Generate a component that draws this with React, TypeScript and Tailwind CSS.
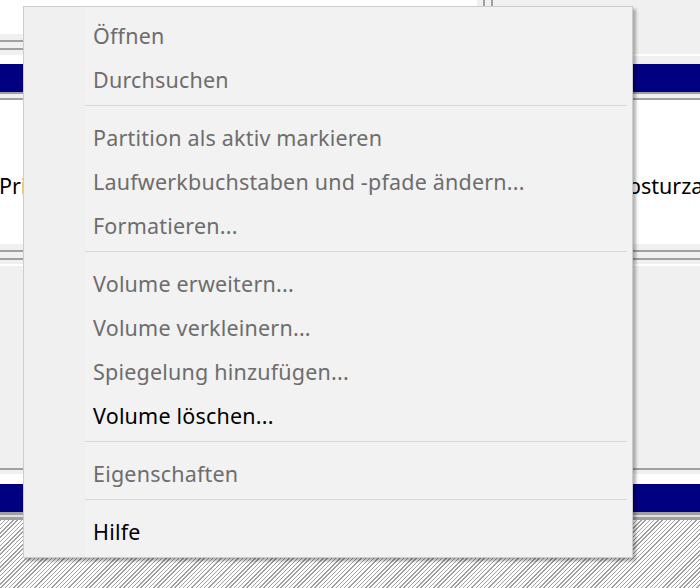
import React from "react";

type Entry = { label: string; enabled?: boolean } | "sep";

const entries: Entry[] = [
  { label: "Öffnen" },
  { label: "Durchsuchen" },
  "sep",
  { label: "Partition als aktiv markieren" },
  { label: "Laufwerkbuchstaben und -pfade ändern..." },
  { label: "Formatieren..." },
  "sep",
  { label: "Volume erweitern..." },
  { label: "Volume verkleinern..." },
  { label: "Spiegelung hinzufügen..." },
  { label: "Volume löschen...", enabled: true },
  "sep",
  { label: "Eigenschaften" },
  "sep",
  { label: "Hilfe", enabled: true },
];

const font = { fontFamily: '"Segoe UI", "Noto Sans", "Open Sans", sans-serif' };

function DoubleLine() {
  return (
    <div className="flex flex-col">
      <div className="h-[6px] bg-[#f0f0f0]" />
      <div className="h-[2px] bg-[#a0a0a0]" />
      <div className="h-[6px] bg-[#f0f0f0]" />
      <div className="h-[2px] bg-[#a0a0a0]" />
    </div>
  );
}

function ContextMenu() {
  return (
    <div
      className="absolute left-[23px] top-[6px] w-[610px] h-[552px] border border-[#cccccc] bg-[#f2f2f2] flex shadow-[3px_3px_3px_rgba(0,0,0,0.3)]"
      style={font}
    >
      <div className="w-[61px] bg-[#f0f0f0]" />
      <div className="flex-1 flex flex-col pt-[7px] pr-[5px]">
        {entries.map((e, i) =>
          e === "sep" ? (
            <div key={i} className="mt-[3px] mb-[10px] h-px bg-[#d7d7d7]" />
          ) : (
            <div
              key={i}
              className={`h-[44px] leading-[44px] pl-[8px] text-[21.5px] tracking-[0.2px] whitespace-nowrap ${
                e.enabled ? "text-black" : "text-[#6d6d6d]"
              }`}
            >
              {e.label}
            </div>
          )
        )}
      </div>
    </div>
  );
}

export default function App() {
  return (
    <div className="relative w-[700px] h-[588px] overflow-hidden bg-[#f0f0f0]">
      <div className="flex flex-col">
        {/* top: volume list + disk header */}
        <div className="flex h-[64px]">
          <div className="w-[477px] flex flex-col">
            <div className="h-[34px] bg-white" />
            <DoubleLine />
            <div className="h-[5px] bg-[#f0f0f0]" />
            <div className="h-[9px] bg-white" />
          </div>
          <div className="flex-1 flex flex-col">
            <div className="h-[54px] flex bg-[#f0f0f0]">
              <div className="w-[6px]" />
              <div className="w-[2px] bg-[#a0a0a0]" />
              <div className="w-[6px]" />
              <div className="w-[2px] bg-[#a0a0a0]" />
            </div>
            <div className="h-[2px] bg-white" />
            <div className="h-[8px] bg-[#f0f0f0]" />
          </div>
        </div>
        <div className="h-[28px] bg-[#000080]" />
        <div className="flex flex-col">
          <div className="h-[2px] bg-[#a0a0a0]" />
          <div className="h-[4px] bg-[#f0f0f0]" />
          <div className="h-[2px] bg-[#a0a0a0]" />
        </div>
        <div
          className="h-[144px] bg-white grid grid-cols-[614px_1fr] pt-[64px] text-[21.5px] leading-[44px] text-black whitespace-nowrap overflow-hidden"
          style={font}
        >
          <div className="overflow-hidden -ml-[1px]">Primäre Partition</div>
          <div className="overflow-hidden">Absturzabbild, Primäre Partition)</div>
        </div>
        <div className="flex flex-col">
          <DoubleLine />
          <div className="h-[4px] bg-[#f0f0f0]" />
          <div className="h-[2px] bg-white" />
        </div>
        <div className="h-[202px] bg-[#f0f0f0]" />
        <div className="h-[2px] bg-[#a0a0a0]" />
        <div className="h-[4px] bg-[#f0f0f0]" />
        <div className="h-[10px] bg-white" />
        <div className="h-[28px] bg-[#000080]" />
        <div className="h-[3px] bg-[#a0a0a0]" />
        <div className="h-[2px] bg-[#e0e0e0]" />
        <div className="h-[3px] bg-[#a0a0a0]" />
        <div className="h-[68px] bg-[repeating-linear-gradient(135deg,#a0a0a0_0px,#a0a0a0_1px,#ffffff_1px,#ffffff_3px)]" />
      </div>
      <ContextMenu />
    </div>
  );
}
